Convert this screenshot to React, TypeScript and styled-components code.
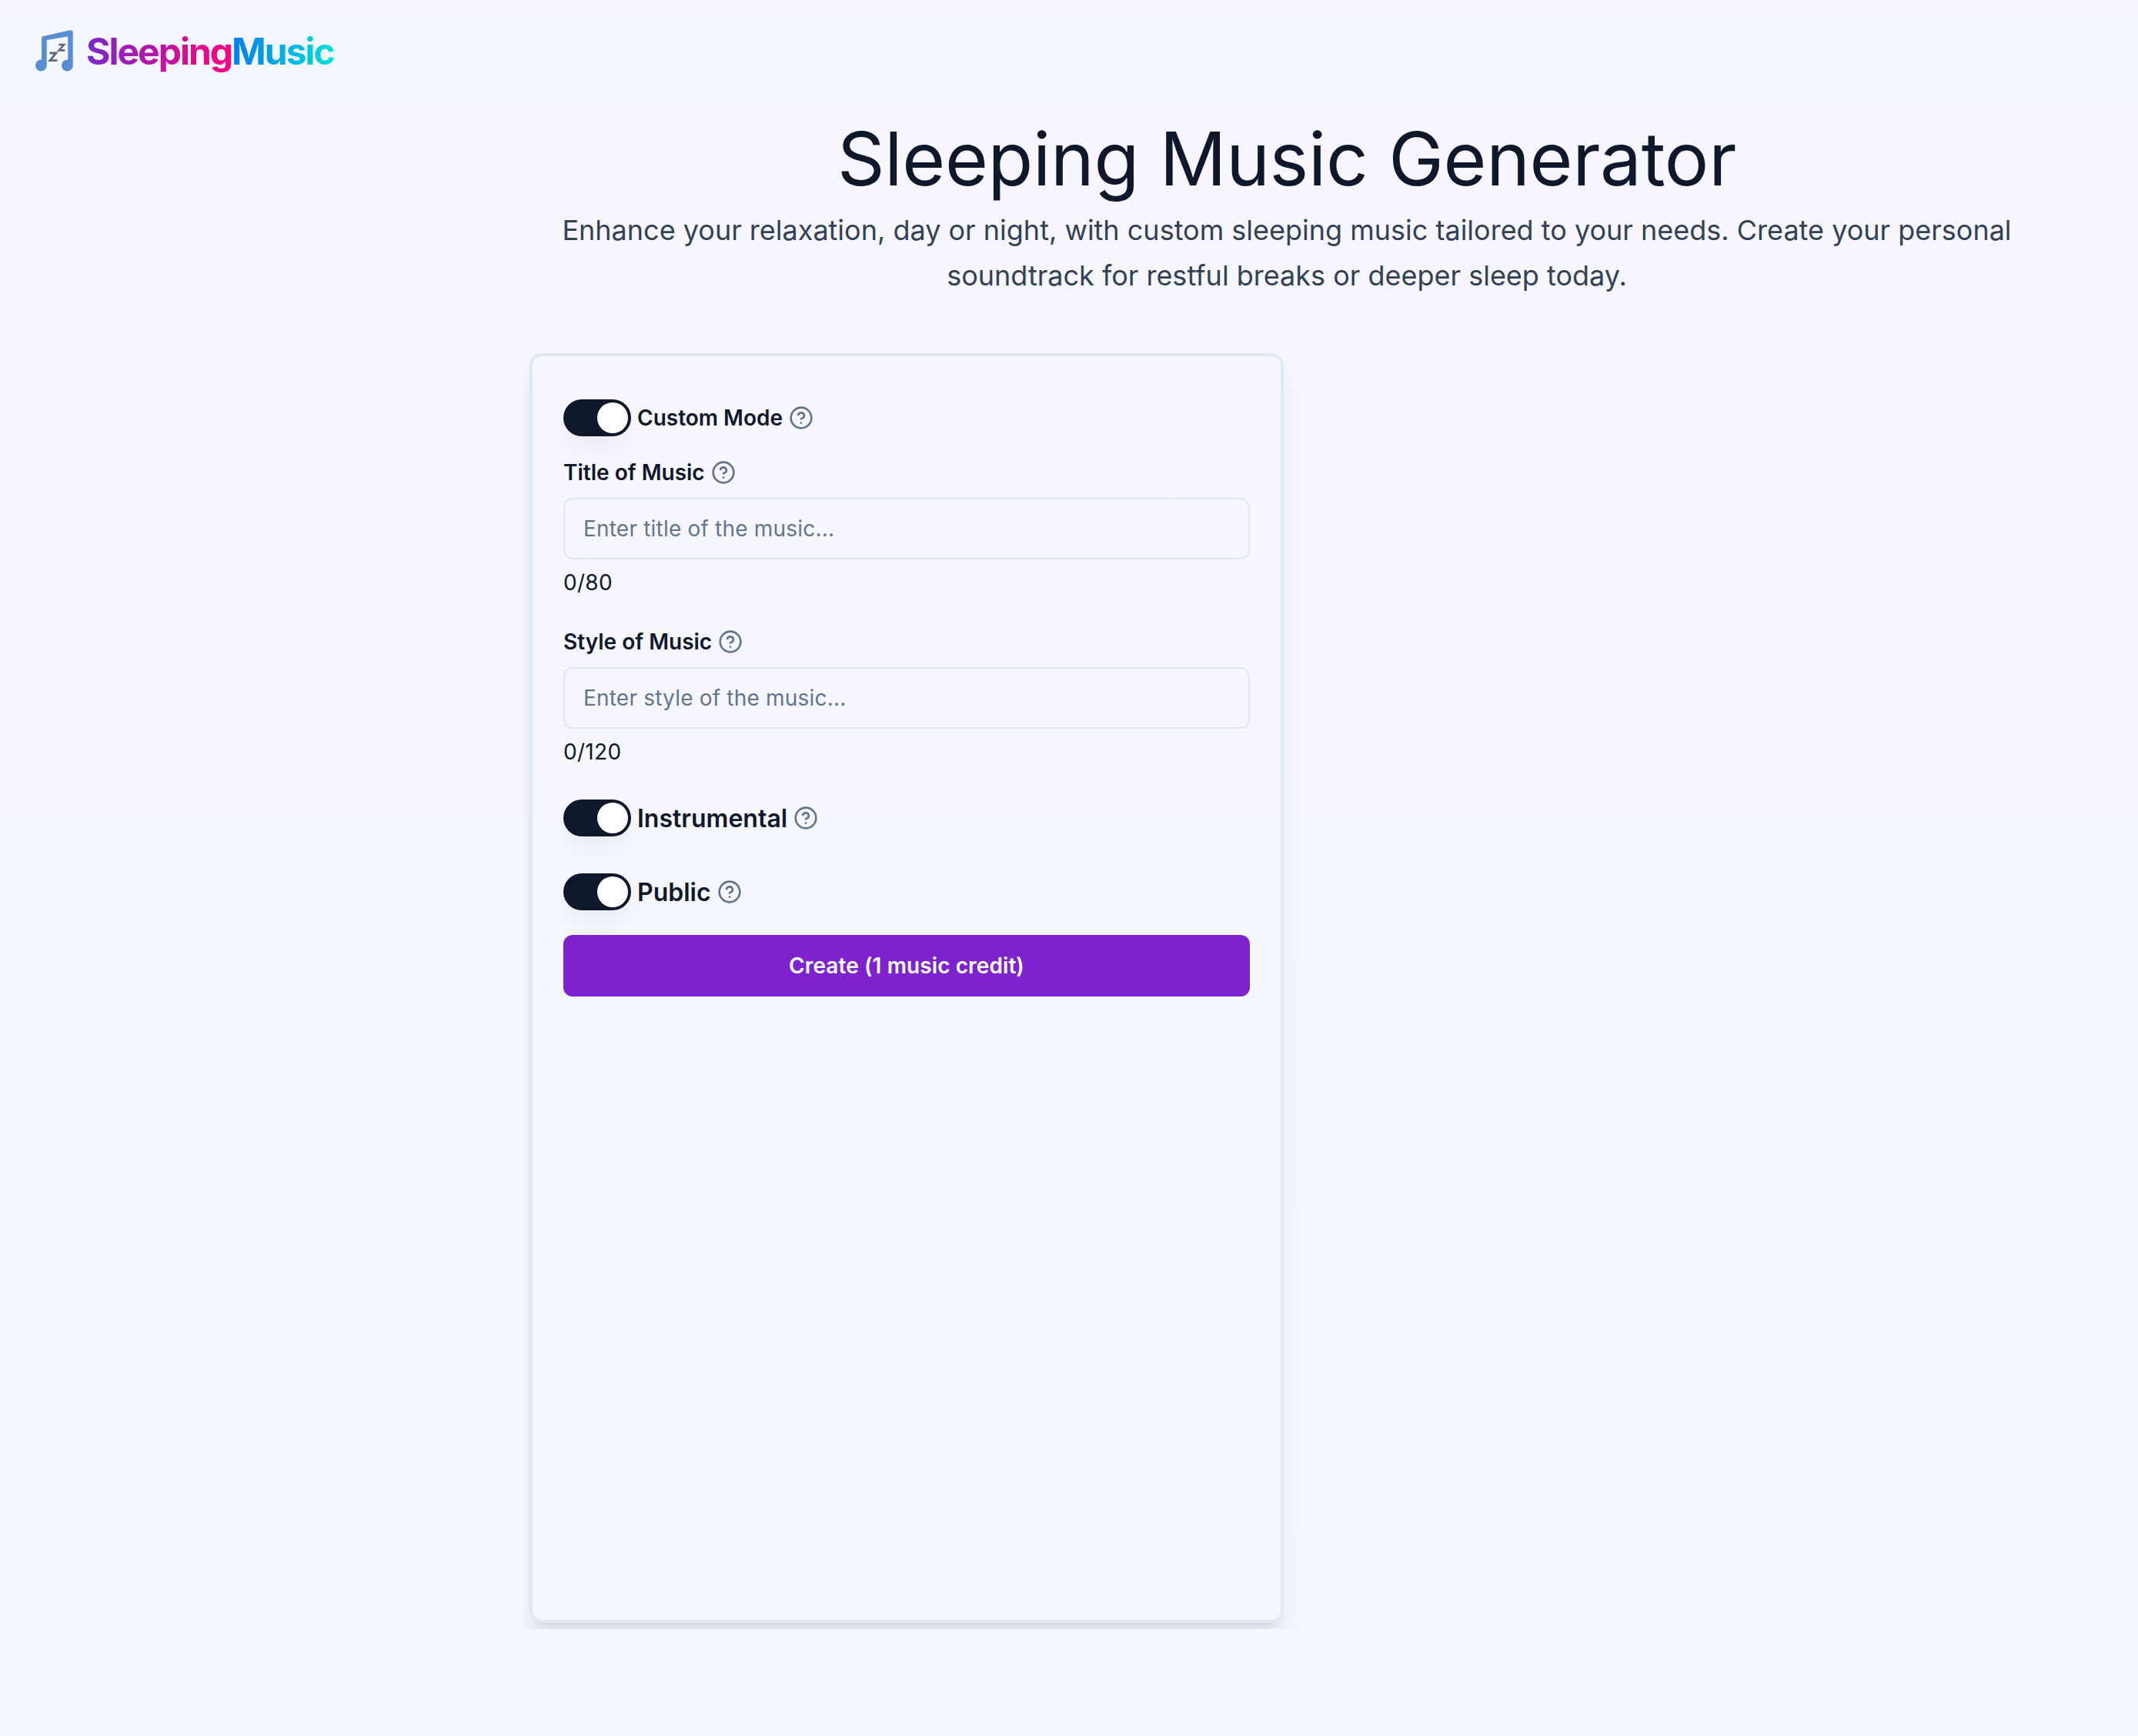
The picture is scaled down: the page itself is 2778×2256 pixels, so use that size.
import React from 'react'
import styled, { createGlobalStyle } from 'styled-components'
import { CircleHelp } from 'lucide-react'

const GlobalStyle = createGlobalStyle`
  html, body {
    margin: 0;
    padding: 0;
  }
  body {
    font-family: Inter, "Liberation Sans", sans-serif;
    color: #0f172a;
    background: #f5f7ff;
  }
  * {
    box-sizing: border-box;
  }
`

const Page = styled.div`
  width: 2778px;
  height: 2256px;
  overflow: hidden;
  background: linear-gradient(180deg, #f8f6ff 0%, #f2f7ff 100%);
`

const Header = styled.header`
  height: 135px;
  padding: 39px 46px 0;
  display: flex;
  align-items: flex-start;
  gap: 16px;
  background: linear-gradient(180deg, #f5f6fe 0%, #f3f7ff 100%);
`

const LogoText = styled.div`
  font-size: 48px;
  line-height: 56px;
  font-weight: 700;
  letter-spacing: -2px;
  display: flex;
`

const LogoWord = styled.span<{ $from: string; $to: string }>`
  background: linear-gradient(90deg, ${p => p.$from}, ${p => p.$to});
  -webkit-background-clip: text;
  background-clip: text;
  color: transparent;
  padding-bottom: 6px;
`

const Main = styled.main`
  width: 1984px;
  margin-left: 680px;
`

const Hero = styled.section`
  text-align: center;
  padding-top: 15px;
`

const Title = styled.h1`
  margin: 0 0 8px;
  font-size: 96px;
  line-height: 112px;
  font-weight: 400;
  letter-spacing: -0.3px;
  color: #0f172a;
`

const Subtitle = styled.p`
  margin: 0;
  font-size: 36px;
  line-height: 58.5px;
  color: #334155;
`

const CardClip = styled.div`
  width: 1040px;
  height: 1666px;
  margin-top: 64px;
  padding: 8px;
  overflow: hidden;
  border-radius: 8px;
`

const Card = styled.div`
  width: 980px;
  height: 1650px;
  padding: 56px 40px;
  border: 4px solid #e2e8f0;
  border-radius: 16px;
  box-shadow: 0 20px 30px -6px rgba(0, 0, 0, 0.1), 0 8px 12px -8px rgba(0, 0, 0, 0.1);
  display: flex;
  flex-direction: column;
`

const ToggleRow = styled.div<{ $top?: number }>`
  display: flex;
  align-items: center;
  gap: 8px;
  height: 48px;
  margin-top: ${p => p.$top ?? 0}px;
`

const SwitchTrack = styled.span`
  width: 88px;
  height: 48px;
  border-radius: 24px;
  background: #0f172a;
  padding: 4px;
  display: flex;
  justify-content: flex-end;
  box-shadow: 0 20px 30px -6px rgba(0, 0, 0, 0.05);
  flex-shrink: 0;
`

const SwitchThumb = styled.span`
  width: 40px;
  height: 40px;
  border-radius: 50%;
  background: #fff;
`

const Label = styled.label<{ $large?: boolean }>`
  font-size: ${p => (p.$large ? 32 : 28)}px;
  font-weight: 600;
  color: #0f172a;
  display: flex;
  align-items: center;
  gap: 8px;
`

const Field = styled.div<{ $top: number }>`
  display: flex;
  flex-direction: column;
  margin-top: ${p => p.$top}px;
`

const FieldLabel = styled(Label)`
  height: 40px;
  margin-bottom: 14px;
  padding-top: 2px;
`

const TextInput = styled.input`
  width: 100%;
  height: 80px;
  padding: 0 24px;
  border: 2px solid #e2e8f0;
  border-radius: 12px;
  background: transparent;
  font-family: inherit;
  font-size: 28px;
  letter-spacing: 0.2px;
  color: #0f172a;
  outline: none;

  &::placeholder {
    color: #64748b;
    opacity: 1;
  }
`

const Counter = styled.div`
  font-size: 28px;
  line-height: 40px;
  letter-spacing: 0.3px;
  margin-top: 10px;
  color: #0f172a;
`

const CreateButton = styled.button`
  width: 100%;
  height: 80px;
  margin-top: 32px;
  border: none;
  border-radius: 12px;
  background: #7e22ce;
  color: #fff;
  font-family: inherit;
  font-size: 28px;
  font-weight: 600;
  letter-spacing: 0.1px;
`

const HelpIcon = styled(CircleHelp)`
  width: 32px;
  height: 32px;
  color: #64748b;
  flex-shrink: 0;
`

const Logo = () => (
  <svg width="50" height="54" viewBox="0 0 50 54" fill="none">
    <path
      d="M8 11 a3 3 0 0 1 2.5-3 L45 .3 a3 3 0 0 1 3.7 3 V46 h-6.5 V8.5 L14.7 13 V46 H8 Z"
      fill="#5a8ed4"
    />
    <circle cx="7.4" cy="46" r="7.4" fill="#5a8ed4" />
    <circle cx="41.4" cy="46" r="7.4" fill="#5a8ed4" />
    <path d="M18.5 30 h8.5 l-8 9.6 h9.3" stroke="#5f6779" strokeWidth="2.8" />
    <path d="M30.2 19 h7 l-6.6 7.4 h7.7" stroke="#5f6779" strokeWidth="2.6" />
  </svg>
)

const Switch = () => (
  <SwitchTrack>
    <SwitchThumb />
  </SwitchTrack>
)

export default function App() {
  return (
    <Page>
      <GlobalStyle />
      <Header>
        <Logo />
        <LogoText>
          <LogoWord $from="#7928ca" $to="#ff0080">Sleeping</LogoWord>
          <LogoWord $from="#007cf0" $to="#00dfd8">Music</LogoWord>
        </LogoText>
      </Header>
      <Main>
        <Hero>
          <Title>Sleeping Music Generator</Title>
          <Subtitle>
            Enhance your relaxation, day or night, with custom sleeping music tailored to your needs. Create your personal
            <br />
            soundtrack for restful breaks or deeper sleep today.
          </Subtitle>
        </Hero>
        <CardClip>
          <Card>
            <ToggleRow>
              <Switch />
              <Label>
                Custom Mode <HelpIcon />
              </Label>
            </ToggleRow>
            <Field $top={26}>
              <FieldLabel>
                Title of Music <HelpIcon />
              </FieldLabel>
              <TextInput placeholder="Enter title of the music..." />
              <Counter>0/80</Counter>
            </Field>
            <Field $top={36}>
              <FieldLabel>
                Style of Music <HelpIcon />
              </FieldLabel>
              <TextInput placeholder="Enter style of the music..." />
              <Counter>0/120</Counter>
            </Field>
            <ToggleRow $top={42}>
              <Switch />
              <Label $large>
                Instrumental <HelpIcon />
              </Label>
            </ToggleRow>
            <ToggleRow $top={48}>
              <Switch />
              <Label $large>
                Public <HelpIcon />
              </Label>
            </ToggleRow>
            <CreateButton>Create (1 music credit)</CreateButton>
          </Card>
        </CardClip>
      </Main>
    </Page>
  )
}
